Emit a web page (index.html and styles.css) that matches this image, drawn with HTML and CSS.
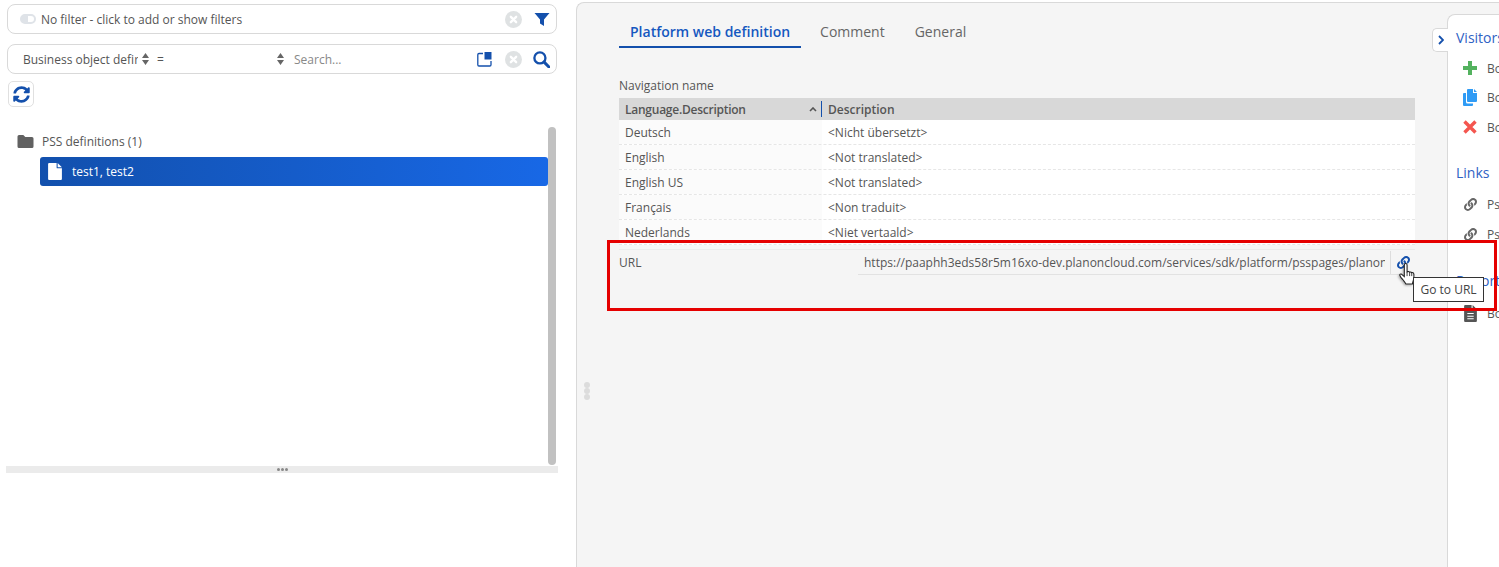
FILE: index.html
```html
<!DOCTYPE html>
<html lang="en">
  <head>
    <meta charset="UTF-8" />
    <meta name="viewport" content="width=device-width, initial-scale=1.0" />
    <title>PSS definitions</title>
    <link rel="stylesheet" href="styles.css">
  </head>
  <body>
    <div class="app">
      <div class="left">
        <div class="field filter">
          <span class="toggle"></span>
          <span class="filter-text">No filter - click to add or show filters</span>
          <svg class="clear" viewBox="0 0 16 16"><circle cx="8" cy="8" r="8" fill="#dfe2e3"/><path d="M5.5 5.5l5 5M10.5 5.5l-5 5" stroke="#fff" stroke-width="2.2" stroke-linecap="round"/></svg>
          <svg class="filter-icon" viewBox="0 0 16 16"><path d="M.5 2h15L10 8.6V15l-4-2.6V8.6z" fill="#1450ac"/></svg>
        </div>
        <div class="field search">
          <span class="select-one">Business object defir</span>
          <svg class="updown" viewBox="0 0 7 12"><path d="M3.5 0L7 5H0zM3.5 12L0 7h7z" fill="#666"/></svg>
          <span class="select-two">=</span>
          <svg class="updown" viewBox="0 0 7 12"><path d="M3.5 0L7 5H0zM3.5 12L0 7h7z" fill="#666"/></svg>
          <span class="search-text">Search...</span>
          <svg class="panel-icon" viewBox="0 0 15 15"><path d="M6 1.5H2A1.2 1.2 0 0 0 .8 2.7v10.100A1.200 1.200 0 0 0 2 14h10.800a1.200 1.200 0 0 0 1.200-1.200V9" fill="none" stroke="#1450ac" stroke-width="1.3"/><path d="M7.500 0H14.500V7.500H7.500z" fill="#1450ac"/></svg>
          <svg class="clear" viewBox="0 0 16 16"><circle cx="8" cy="8" r="8" fill="#dfe2e3"/><path d="M5.5 5.5l5 5M10.5 5.5l-5 5" stroke="#fff" stroke-width="2.2" stroke-linecap="round"/></svg>
          <svg class="search-icon" viewBox="0 0 16 16"><circle cx="6.5" cy="6.5" r="5.2" fill="none" stroke="#1450ac" stroke-width="2.2"/><path d="M10.500 10.500L15 15" stroke="#1450ac" stroke-width="2.8" stroke-linecap="round"/></svg>
        </div>
        <button class="refresh">
          <svg viewBox="0 0 512 512" width="17" height="17"><path fill="#1450ac" d="M370.700 133.300C339.500 104 298.900 88 255.800 88c-77.500.1-144.300 53.200-162.800 126.900-1.300 5.400-6.100 9.200-11.700 9.200H24.100c-7.500 0-13.200-6.800-11.800-14.200C33.900 94.900 134.800 8 256 8c66.400 0 126.800 26.100 171.300 68.700L463 41c15.100-15.100 41-4.400 41 17V192c0 13.300-10.700 24-24 24H345.900c-21.400 0-32.100-25.900-17-41l41.800-41.700zM32 296h134.100c21.400 0 32.100 25.900 17 41l-41.800 41.800c31.300 29.300 71.800 45.300 114.900 45.200 77.400-.1 144.300-53.100 162.800-126.800 1.300-5.400 6.100-9.200 11.700-9.200h57.300c7.500 0 13.200 6.800 11.800 14.200C478.100 417.100 377.200 504 256 504c-66.400 0-126.800-26.100-171.300-68.700L49 471c-15.100 15.100-41 4.400-41-17V320c0-13.300 10.700-24 24-24z"/></svg>
        </button>
        <div class="tree">
          <div class="tree-scroll">
            <div class="tree-group">
              <svg class="folder" viewBox="0 0 16 13"><path d="M0 1.500A1.500 1.500 0 0 1 1.500 0h4.300l2 2h6.700A1.500 1.500 0 0 1 16 3.500v8a1.500 1.500 0 0 1-1.500 1.500h-13A1.500 1.500 0 0 1 0 11.500z" fill="#616161"/></svg>
              <span>PSS definitions (1)</span>
            </div>
            <div class="tree-item">
              <svg class="doc" viewBox="0 0 13 16"><path d="M0 1a1 1 0 0 1 1-1h7v4.200A.8.8 0 0 0 8.800 5H13v10a1 1 0 0 1-1 1H1a1 1 0 0 1-1-1z M9 0l4 4H9z" fill="#fff"/></svg>
              <span>test1, test2</span>
            </div>
          </div>
          <div class="scrollbar"></div>
        </div>
        <div class="h-splitter"><i></i><i></i><i></i></div>
      </div>

      <div class="main">
        <div class="v-splitter"><i></i><i></i><i></i></div>
        <div class="content">
          <div class="tabs">
            <span class="tab active">Platform web definition</span>
            <span class="tab">Comment</span>
            <span class="tab">General</span>
          </div>
          <div class="label">Navigation name</div>
          <div class="grid">
            <div class="row head">
              <div class="col-a">Language.Description<svg class="sort" viewBox="0 0 8 5"><path d="M1 4l3-3 3 3" fill="none" stroke="#555" stroke-width="1.6"/></svg></div>
              <div class="col-b">Description</div>
            </div>
            <div class="row"><div class="col-a">Deutsch</div><div class="col-b">&lt;Nicht übersetzt&gt;</div></div>
            <div class="row"><div class="col-a">English</div><div class="col-b">&lt;Not translated&gt;</div></div>
            <div class="row"><div class="col-a">English US</div><div class="col-b">&lt;Not translated&gt;</div></div>
            <div class="row"><div class="col-a">Français</div><div class="col-b">&lt;Non traduit&gt;</div></div>
            <div class="row"><div class="col-a">Nederlands</div><div class="col-b">&lt;Niet vertaald&gt;</div></div>
          </div>
          <div class="url-row">
            <div class="url-label">URL</div>
            <div class="url-value">
              <span class="url-text">https://paaphh3eds58r5m16xo-dev.planoncloud.com/services/sdk/platform/psspages/planon</span>
              <span class="url-sep"></span>
              <svg class="url-link" viewBox="0 0 512 512"><path fill="#1450ac" d="M326.600 185.400c59.700 59.800 58.900 155.700.4 214.600l-67.200 67.200c-59.300 59.300-155.700 59.300-215 0s-59.300-155.700 0-215l37.100-37.100c9.800-9.800 26.800-3.300 27.300 10.600.6 17.700 3.800 35.500 9.700 52.600 2 5.800.6 12.200-3.800 16.500l-13.100 13.100c-28 28-28.900 73.700-1.200 102 28 28.500 74 28.700 102.200.4l67.200-67.200c28.200-28.200 28.100-73.800 0-101.800-3.700-3.700-7.400-6.500-10.300-8.500-4.100-2.800-6.700-7.400-6.900-12.400-.4-10.600 3.400-21.500 11.700-29.800l21-21c5.500-5.500 14.200-6.200 20.600-1.700 7.300 5.100 14.200 10.900 20.500 17.200zM467.500 44.400c-59.300-59.300-155.700-59.300-215 0l-67.200 67.200c-.1.100-.1.100-.2.200-58.500 58.900-59.300 154.800.4 214.600 6.300 6.300 13.200 12.100 20.500 17.200 6.400 4.500 15.100 3.800 20.600-1.700l21-21c8.300-8.300 12.100-19.200 11.700-29.800-.2-5-2.800-9.600-6.900-12.400-2.900-2-6.600-4.800-10.300-8.500-28.100-28-28.200-73.600 0-101.800l67.200-67.200c28.200-28.300 74.200-28.100 102.200.4 27.700 28.300 26.800 74-1.200 102l-13.100 13.100c-4.400 4.300-5.800 10.700-3.800 16.500 5.900 17.100 9.100 34.900 9.700 52.600.5 13.900 17.500 20.400 27.300 10.600l37.100-37.100c59.300-59.300 59.300-155.700 0-215z"/></svg>
            </div>
          </div>
        </div>

        <div class="side">
          <span class="side-toggle"><svg viewBox="0 0 6 10" width="6" height="10"><path d="M1 1l4 4-4 4" fill="none" stroke="#1450ac" stroke-width="1.8"/></svg></span>
          <div class="side-title">Visitors</div>
          <div class="side-item item-first">
            <svg viewBox="0 0 14 14" class="side-icon"><path d="M5 0h4v5h5v4H9v5H5V9H0V5h5z" fill="#53b25f"/></svg>
            <span>Bo</span>
          </div>
          <div class="side-item">
            <svg viewBox="0 0 14 17" class="side-icon copy"><path d="M5 0h5v4h4v8a1 1 0 0 1-1 1H5a1 1 0 0 1-1-1V1a1 1 0 0 1 1-1zM11 0l3 3h-3zM1 4h2v9a1.500 1.500 0 0 0 1.500 1.500H10V16a1 1 0 0 1-1 1H1a1 1 0 0 1-1-1V5a1 1 0 0 1 1-1z" fill="#2f9bf5"/></svg>
            <span>Bo</span>
          </div>
          <div class="side-item item-third">
            <svg viewBox="0 0 14 14" class="side-icon"><path d="M1.500 1.500l11 11M12.500 1.500l-11 11" stroke="#f4564f" stroke-width="3.4"/></svg>
            <span>Bo</span>
          </div>
          <div class="side-title links">Links</div>
          <div class="side-item link-item link-first">
            <svg viewBox="0 0 512 512" class="chain"><path fill="#666" d="M326.600 185.400c59.700 59.800 58.900 155.700.4 214.600l-67.200 67.200c-59.300 59.300-155.700 59.300-215 0s-59.300-155.700 0-215l37.100-37.100c9.800-9.800 26.800-3.300 27.300 10.600.6 17.700 3.800 35.500 9.700 52.600 2 5.800.6 12.200-3.800 16.500l-13.100 13.100c-28 28-28.900 73.700-1.200 102 28 28.500 74 28.700 102.200.4l67.200-67.200c28.200-28.200 28.100-73.800 0-101.800-3.700-3.700-7.400-6.500-10.300-8.500-4.100-2.800-6.700-7.400-6.900-12.400-.4-10.600 3.400-21.500 11.700-29.800l21-21c5.500-5.500 14.200-6.200 20.600-1.700 7.300 5.100 14.200 10.900 20.500 17.200zM467.500 44.400c-59.300-59.300-155.700-59.300-215 0l-67.200 67.200c-.1.100-.1.100-.2.200-58.500 58.900-59.300 154.800.4 214.600 6.300 6.300 13.200 12.100 20.500 17.200 6.400 4.500 15.100 3.800 20.600-1.700l21-21c8.300-8.300 12.100-19.200 11.700-29.800-.2-5-2.800-9.600-6.900-12.400-2.900-2-6.600-4.800-10.300-8.500-28.100-28-28.200-73.600 0-101.800l67.200-67.200c28.200-28.300 74.200-28.100 102.200.4 27.700 28.300 26.800 74-1.200 102l-13.100 13.100c-4.400 4.300-5.800 10.700-3.800 16.500 5.900 17.100 9.100 34.900 9.700 52.600.5 13.900 17.500 20.400 27.300 10.600l37.100-37.100c59.300-59.300 59.300-155.700 0-215z"/></svg>
            <span>Ps</span>
          </div>
          <div class="side-item link-item">
            <svg viewBox="0 0 512 512" class="chain"><path fill="#666" d="M326.600 185.400c59.700 59.800 58.900 155.700.4 214.600l-67.200 67.200c-59.300 59.300-155.700 59.300-215 0s-59.300-155.700 0-215l37.100-37.100c9.800-9.800 26.800-3.300 27.300 10.600.6 17.700 3.800 35.500 9.700 52.600 2 5.800.6 12.200-3.800 16.500l-13.100 13.100c-28 28-28.900 73.700-1.200 102 28 28.500 74 28.700 102.200.4l67.200-67.200c28.200-28.200 28.100-73.800 0-101.800-3.700-3.700-7.400-6.500-10.300-8.500-4.100-2.800-6.700-7.400-6.900-12.400-.4-10.600 3.400-21.500 11.700-29.800l21-21c5.500-5.500 14.200-6.200 20.600-1.700 7.300 5.100 14.200 10.900 20.500 17.200zM467.500 44.400c-59.300-59.300-155.700-59.300-215 0l-67.200 67.200c-.1.100-.1.100-.2.200-58.500 58.900-59.300 154.800.4 214.600 6.300 6.300 13.200 12.100 20.500 17.200 6.400 4.500 15.100 3.800 20.600-1.700l21-21c8.300-8.300 12.100-19.200 11.700-29.800-.2-5-2.800-9.600-6.900-12.400-2.900-2-6.600-4.800-10.300-8.500-28.100-28-28.200-73.600 0-101.800l67.200-67.200c28.200-28.300 74.200-28.100 102.200.4 27.700 28.300 26.800 74-1.200 102l-13.100 13.100c-4.400 4.300-5.800 10.700-3.800 16.500 5.900 17.100 9.100 34.900 9.700 52.600.5 13.900 17.500 20.400 27.300 10.600l37.100-37.100c59.300-59.300 59.300-155.700 0-215z"/></svg>
            <span>Ps</span>
          </div>
          <div class="side-title reports">Reports</div>
          <div class="side-item report-item">
            <svg viewBox="0 0 12 16" class="report-icon"><path d="M0 1a1 1 0 0 1 1-1h6v4.200a.8.8 0 0 0 .8.8H12v10a1 1 0 0 1-1 1H1a1 1 0 0 1-1-1zM8 0l4 4H8z" fill="#555"/><path d="M3 8h6M3 10.500h6M3 13h6" stroke="#fff"/></svg>
            <span>Bo</span>
          </div>
        </div>
      </div>
    </div>

    <div class="highlight"></div>
    <svg class="hand" viewBox="0 0 16 21"><path d="M5 1.500a1.300 1.300 0 0 1 2.600 0V8l.6-.2c.8-.2 1.500 0 1.800.5.800-.3 1.600-.1 1.900.5.900-.3 1.800 0 2 1 .2 1.800.1 4.500-.4 6.200-.3 1.200-.8 2.200-.9 3.500H6.500c-.6-1.500-1.800-2.700-3-4.300C2.500 14.300 1.200 12.500.8 11.500.4 10.400 1.600 9.500 2.600 10.300L5 12.500z" fill="#fff" stroke="#222" stroke-width="1"/><path d="M7.600 8v4M10 8.300v3.700M12 8.800v3.200" stroke="#222" stroke-width=".8"/></svg>
    <div class="tooltip">Go to URL</div>
  </body>
</html>
```

FILE: styles.css
```css
html,
body {
  margin: 0;
  padding: 0;
  height: 100%;
  overflow: hidden;
  background: #fff;
  font-family: "Open Sans", sans-serif;
  font-size: 12px;
  color: #555;
}

svg {
  display: block;
  flex: none;
}

.app {
  display: flex;
  height: 567px;
  overflow: hidden;
}

/* left column */
.left {
  width: 576px;
  flex: none;
  box-sizing: border-box;
  padding: 4px 19px 0 7px;
  display: flex;
  flex-direction: column;
}

.field {
  height: 30px;
  box-sizing: border-box;
  border: 1px solid #d9d9d9;
  border-radius: 8px;
  display: flex;
  align-items: center;
  padding-right: 6px;
}

.filter {
  padding-left: 12px;
}

.toggle {
  width: 16px;
  height: 10px;
  box-sizing: border-box;
  border-radius: 5px;
  border: 2px solid #dfe3e8;
  background: linear-gradient(90deg, #dfe3e8 50%, #fff 50%);
  margin-right: 5px;
}

.filter-text {
  flex: 1;
}

.clear {
  width: 17px;
  height: 17px;
}

.filter-icon {
  width: 16px;
  height: 16px;
  margin-left: 12px;
}

.search {
  margin-top: 10px;
  padding-left: 15px;
}

.select-one {
  width: 115px;
  margin-right: 4px;
  overflow: hidden;
  white-space: nowrap;
}

.updown {
  width: 7px;
  height: 12px;
}

.select-two {
  margin-left: 8px;
  width: 120px;
}

.search-text {
  flex: 1;
  margin-left: 10px;
  color: #888;
}

.panel-icon {
  width: 15px;
  height: 15px;
  margin-right: 13px;
}

.search-icon {
  width: 17px;
  height: 17px;
  margin-left: 11px;
}

.refresh {
  width: 26px;
  height: 26px;
  margin: 7px 0 0 1px;
  padding: 0;
  background: #fff;
  border: 1px solid #e0e0e0;
  border-radius: 5px;
  display: flex;
  align-items: center;
  justify-content: center;
}

.tree {
  display: flex;
  margin-top: 20px;
  height: 338px;
}

.tree-scroll {
  flex: 1;
}

.tree-group {
  display: flex;
  align-items: center;
  box-sizing: border-box;
  height: 30px;
  padding: 0 0 2px 10px;
}

.folder {
  width: 17px;
  height: 13px;
  margin-right: 8px;
}

.tree-item {
  height: 29px;
  margin-left: 33px;
  display: flex;
  align-items: center;
  padding-left: 8px;
  border-radius: 3px;
  color: #fff;
  background: linear-gradient(90deg, #1250ad, #1868e6);
}

.doc {
  width: 14px;
  height: 17px;
  margin-right: 10px;
}

.scrollbar {
  width: 8px;
  margin-right: 1px;
  border-radius: 4px;
  background: #c1c1c1;
}

.h-splitter {
  margin: 1px -1px 0;
  height: 7px;
  background: #ebebeb;
  display: flex;
  justify-content: center;
  align-items: center;
  gap: 1px;
}

.h-splitter i {
  width: 3px;
  height: 3px;
  border-radius: 50%;
  background: #888;
}

/* main panel */
.main {
  flex: 1;
  min-width: 0;
  display: flex;
  position: relative;
  margin-top: 2px;
  background: #f5f5f5;
  border: 1px solid #d9d9d9;
  border-width: 1px 0 0 1px;
  border-top-left-radius: 8px;
}

.v-splitter {
  position: absolute;
  left: 7px;
  top: 379px;
  display: flex;
  flex-direction: column;
}

.v-splitter i {
  width: 6px;
  height: 6px;
  border-radius: 50%;
  background: #dcdcdc;
}

.content {
  width: 796px;
  flex: none;
  margin-left: 42px;
}

.tabs {
  display: flex;
  margin-top: 13px;
  height: 32px;
}

.tab {
  font-size: 14px;
  padding: 6px 0 0;
  margin-right: 30px;
  color: #666;
  box-sizing: border-box;
}

.tab.active {
  padding: 6px 11px 0;
  margin-right: 19px;
  color: #1558c0;
  font-weight: 600;
  border-bottom: 2px solid #1450ac;
}

.label {
  margin-top: 30px;
  height: 20px;
  line-height: 16px;
}

.row {
  display: flex;
  height: 25px;
  background: #fff;
  box-sizing: border-box;
  border-bottom: 1px dashed #e6e6e6;
  line-height: 26px;
}

.row.head {
  height: 22px;
  line-height: 23px;
  background: #d8d8d8;
  border-bottom: 0;
  font-weight: 600;
}

.col-a {
  width: 203px;
  box-sizing: border-box;
  padding-left: 6px;
  position: relative;
  background: #fbfbfb;
}

.head .col-a {
  background: none;
  border-right: 1px solid #1450ac;
  height: 16px;
  margin-top: 3px;
  line-height: 17px;
  letter-spacing: -0.25px;
}

.col-b {
  padding-left: 6px;
}

.sort {
  position: absolute;
  right: 4px;
  top: 6px;
  width: 8px;
  height: 5px;
}

.url-row {
  display: flex;
  margin-top: 4px;
  border-top: 1px solid #ebebeb;
  padding-top: 1px;
}

.url-label {
  width: 239px;
  line-height: 24px;
}

.url-value {
  width: 557px;
  display: flex;
  height: 24px;
  box-sizing: border-box;
  border-bottom: 1px solid #e2e2e2;
  align-items: center;
  padding-left: 6px;
}

.url-text {
  width: 521px;
  overflow: hidden;
  white-space: nowrap;
  line-height: 23px;
}

.url-sep {
  width: 1px;
  height: 23px;
  margin-left: 5px;
  background: #ddd;
}

.url-link {
  width: 13px;
  height: 13px;
  margin-left: 6px;
}

/* right panel */
.side {
  position: relative;
  margin: 11px 0 0 32px;
  flex: 1;
  background: #fff;
  border: 1px solid #d9d9d9;
  border-width: 1px 0 0 1px;
  border-top-left-radius: 8px;
  white-space: nowrap;
}

.side-toggle {
  position: absolute;
  left: -16px;
  top: 13px;
  width: 15px;
  height: 22px;
  background: #fff;
  border: 1px solid #d9d9d9;
  border-right: 0;
  border-radius: 5px 0 0 5px;
  display: flex;
  align-items: center;
  justify-content: center;
}

.side-title {
  font-size: 14px;
  color: #2f62c4;
  margin: 13px 0 0 8px;
  line-height: 20px;
}

.side-title.links {
  margin-top: 26px;
}

.side-title.reports {
  margin-top: 27px;
}

.side-item {
  display: flex;
  align-items: center;
  height: 20px;
  margin-top: 9px;
  padding-left: 15px;
}

.item-first,
.item-third {
  margin-top: 10px;
}

.side-icon {
  width: 14px;
  height: 14px;
  margin-right: 10px;
}

.side-icon.copy {
  height: 17px;
}

.link-item {
  margin-top: 10px;
}

.link-first {
  margin-top: 11px;
}

.chain {
  width: 13px;
  height: 13px;
  margin-left: 1px;
  margin-right: 10px;
}

.report-icon {
  width: 13px;
  height: 17px;
  margin-left: 1px;
  margin-right: 10px;
}

.report-item {
  margin-top: 12px;
}

/* overlays on top of the page */
.highlight {
  position: absolute;
  left: 607px;
  top: 240px;
  width: 890px;
  height: 71px;
  box-sizing: border-box;
  border: 3px solid #e50000;
}

.hand {
  position: absolute;
  left: 1399px;
  top: 263px;
  width: 17px;
  height: 23px;
  filter: drop-shadow(-1px 1px 1px rgba(0, 0, 0, 0.3));
}

.tooltip {
  position: absolute;
  left: 1413px;
  top: 277px;
  height: 25px;
  line-height: 24px;
  box-sizing: border-box;
  width: 71px;
  text-align: center;
  background: #fff;
  border: 1px solid #333;
  color: #444;
}
```
